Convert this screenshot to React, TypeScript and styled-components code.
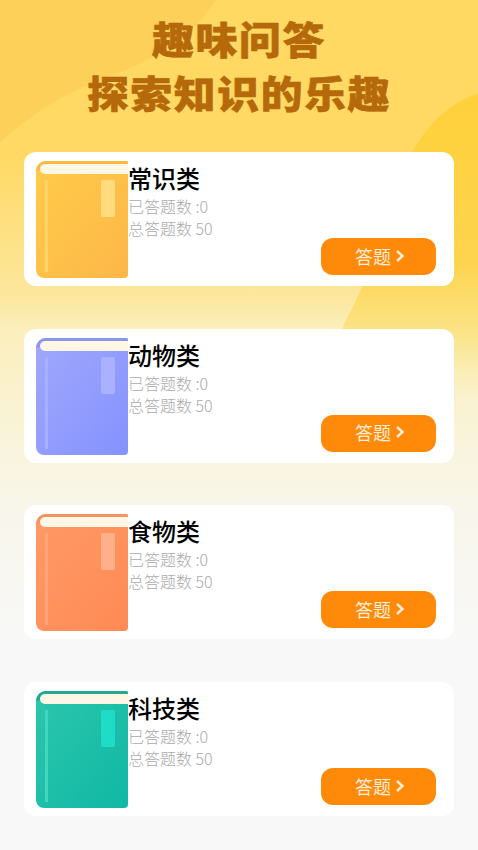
import React from 'react';
import styled, { createGlobalStyle } from 'styled-components';

const subjects = [
  { name: '常识类', from: '#ffcb4a', to: '#fdb748', edge: '#f9b93f', mark: '#ffdb80', stripe: '#ffd468' },
  { name: '动物类', from: '#a0a8fb', to: '#8592ff', edge: '#8b95ee', mark: '#aab2ff', stripe: '#a8b0fd' },
  { name: '食物类', from: '#ff9a66', to: '#ff8a55', edge: '#f5935f', mark: '#ffb08a', stripe: '#ffa578' },
  { name: '科技类', from: '#2cc6ac', to: '#10b8a4', edge: '#23a896', mark: '#1fdcc6', stripe: '#42d6bd' },
];

const BookIcon = ({ id, from, to, edge, mark, stripe }: { id: string; from: string; to: string; edge: string; mark: string; stripe: string }) => (
  <BookSvg viewBox="0 0 92 117">
    <defs>
      <linearGradient id={id} x1="0" y1="0" x2="1" y2="1">
        <stop offset="0" stopColor={from} />
        <stop offset="1" stopColor={to} />
      </linearGradient>
    </defs>
    <path d="M10 0H90a2 2 0 0 1 2 2V113a4 4 0 0 1-4 4H8a8 8 0 0 1-8-8V10A10 10 0 0 1 10 0Z" fill={`url(#${id})`} />
    <path d="M10 0H90a2 2 0 0 1 2 2V4H8a4 4 0 0 0-4 5L0 10A10 10 0 0 1 10 0Z" fill={edge} />
    <path d="M9 3H92V13H9a5 5 0 0 1 0-10Z" fill="#fff7e6" />
    <rect x="9" y="19" width="3" height="92" fill={stripe} />
    <rect x="65" y="19" width="14" height="37" rx="2" fill={mark} />
  </BookSvg>
);

const App = () => {
  return (
    <Page>
      <GlobalStyle />
      <Backdrop viewBox="0 0 478 850" preserveAspectRatio="none">
        <defs>
          <linearGradient id="blob-fade" x1="0" y1="0" x2="0" y2="1">
            <stop offset="0" stopColor="#ffd03a" />
            <stop offset="0.55" stopColor="#fdd44e" />
            <stop offset="0.8" stopColor="#fbe27f" stopOpacity="0.8" />
            <stop offset="1" stopColor="#fbe9a8" stopOpacity="0" />
          </linearGradient>
        </defs>
        <path d="M0 0H216C190 40 150 62 105 78C60 94 25 120 0 142Z" fill="#fdd159" />
        <path d="M478 94C440 104 410 145 395 190C382 235 368 280 345 322C335 345 325 370 320 400H478Z" fill="url(#blob-fade)" />
      </Backdrop>
      <Title>
        <TitleLine>趣味问答</TitleLine>
        <TitleLine>探索知识的乐趣</TitleLine>
      </Title>
      <CardList>
        {subjects.map((subject, index) => (
          <Card key={subject.name}>
            <BookIcon id={`book-${index}`} {...subject} />
            <Info>
              <Name>{subject.name}</Name>
              <Stat>已答题数 :0</Stat>
              <Stat>总答题数 50</Stat>
              <AnswerButton>
                答题
                <Chevron viewBox="0 0 10 14">
                  <path d="M2 2l5.5 5L2 12" fill="none" stroke="#ffeeda" strokeWidth="2.4" />
                </Chevron>
              </AnswerButton>
            </Info>
          </Card>
        ))}
      </CardList>
    </Page>
  );
};

export default App;

const GlobalStyle = createGlobalStyle`
  html,
  body {
    margin: 0;
    padding: 0;
    background: #f8f8f8;
  }
`;

const Page = styled.main`
  position: relative;
  overflow: hidden;

  width: 478px;
  height: 850px;
  padding-top: 11px;
  box-sizing: border-box;

  background: linear-gradient(180deg, #ffd962 0%, #ffd963 18%, #fce79e 35%, #fbefbe 39%, #f8f6ea 59%, #f8f8f8 76%, #f8f8f8 100%);
  font-family: 'Noto Sans CJK SC', 'Noto Sans', sans-serif;
`;

const Backdrop = styled.svg`
  position: absolute;
  top: 0;
  left: 0;

  width: 478px;
  height: 850px;
`;

const Title = styled.h1`
  position: relative;

  margin: 0 0 33px;

  color: #b5690a;
  font-size: 38px;
  font-weight: 900;
  letter-spacing: 1.5px;
  text-align: center;
  -webkit-text-stroke: 0.6px #b5690a;
`;

const TitleLine = styled.div`
  height: 54px;
  line-height: 54px;
  transform: scaleX(1.1);
`;

const CardList = styled.section`
  position: relative;

  display: flex;
  flex-direction: column;
  gap: 42.7px;

  padding: 0 24px;
`;

const Card = styled.article`
  display: flex;

  height: 134px;
  padding: 9px 18px 8px 12px;
  box-sizing: border-box;

  background: #fff;
  border-radius: 12px;
`;

const BookSvg = styled.svg`
  flex: none;

  width: 92px;
  height: 117px;
`;

const Info = styled.div`
  display: flex;
  flex: 1;
  flex-direction: column;
`;

const Name = styled.h2`
  margin: 0;

  color: #000;
  font-size: 24px;
  font-weight: 500;
  line-height: 34px;
`;

const Stat = styled.p`
  margin: 0;

  color: #aaa;
  font-size: 16px;
  font-weight: 300;
  line-height: 22px;
`;

const AnswerButton = styled.button`
  display: flex;
  flex: none;
  gap: 4px;
  align-items: center;
  align-self: flex-end;
  justify-content: center;

  width: 115px;
  height: 37px;
  margin-top: -1px;
  padding: 0 0 2px 3px;

  background: #ff8a0a;
  border: 0;
  border-radius: 12px;
  color: #ffeeda;
  font-family: inherit;
  font-size: 18px;
`;

const Chevron = styled.svg`
  width: 10px;
  height: 14px;
`;
